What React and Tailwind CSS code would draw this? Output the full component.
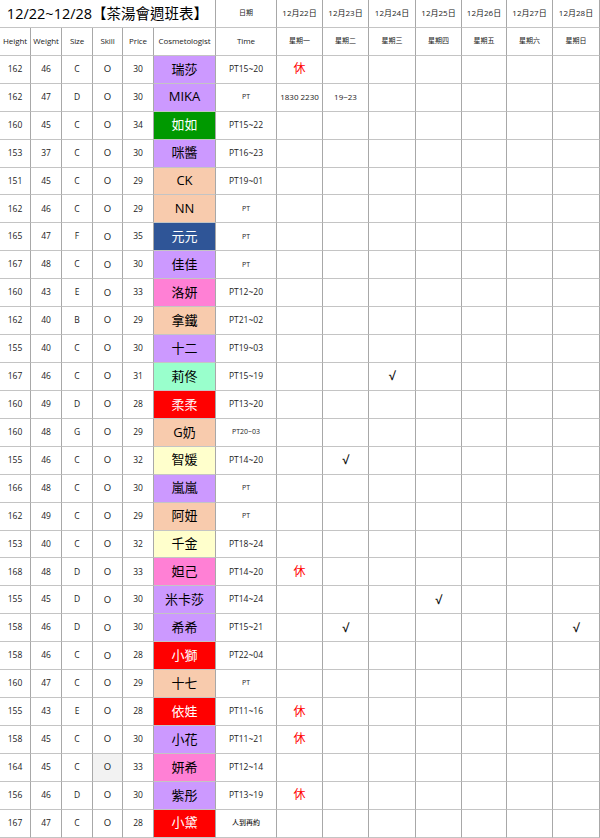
import React from "react";

const C = {
  purple: "bg-[#cc99ff] text-black",
  green: "bg-[#009900] text-white",
  peach: "bg-[#f8cbad] text-black",
  blue: "bg-[#2f5597] text-white",
  pink: "bg-[#ff80d5] text-black",
  mint: "bg-[#99ffcc] text-black",
  red: "bg-[#ff0000] text-white",
  yellow: "bg-[#ffffcc] text-black",
};

const rows = [
  ["162", "46", "C", "30", "瑞莎", "purple", "PT15~20", "n", { 0: "休" }],
  ["162", "47", "D", "30", "MIKA", "purple", "PT", "s", { 0: "1830 2230", 1: "19~23" }],
  ["160", "45", "C", "34", "如如", "green", "PT15~22", "n", {}],
  ["153", "37", "C", "30", "咪醬", "purple", "PT16~23", "n", {}],
  ["151", "45", "C", "29", "CK", "peach", "PT19~01", "n", {}],
  ["162", "46", "C", "29", "NN", "peach", "PT", "s", {}],
  ["165", "47", "F", "35", "元元", "blue", "PT", "s", {}],
  ["167", "48", "C", "30", "佳佳", "purple", "PT", "s", {}],
  ["160", "43", "E", "33", "洛妍", "pink", "PT12~20", "n", {}],
  ["162", "40", "B", "29", "拿鐵", "peach", "PT21~02", "n", {}],
  ["155", "40", "C", "30", "十二", "purple", "PT19~03", "n", {}],
  ["167", "46", "C", "31", "莉佟", "mint", "PT15~19", "n", { 2: "√" }],
  ["160", "49", "D", "28", "柔柔", "red", "PT13~20", "n", {}],
  ["160", "48", "G", "29", "G奶", "peach", "PT20~03", "s", {}],
  ["155", "46", "C", "32", "智媛", "yellow", "PT14~20", "n", { 1: "√" }],
  ["166", "48", "C", "30", "嵐嵐", "purple", "PT", "s", {}],
  ["162", "49", "C", "29", "阿妞", "peach", "PT", "s", {}],
  ["153", "40", "C", "32", "千金", "yellow", "PT18~24", "n", {}],
  ["168", "48", "D", "33", "妲己", "pink", "PT14~20", "n", { 0: "休" }],
  ["155", "45", "D", "30", "米卡莎", "purple", "PT14~24", "n", { 3: "√" }],
  ["158", "46", "D", "30", "希希", "purple", "PT15~21", "n", { 1: "√", 6: "√" }],
  ["158", "46", "C", "28", "小獅", "red", "PT22~04", "n", {}],
  ["160", "47", "C", "29", "十七", "peach", "PT", "s", {}],
  ["155", "43", "E", "28", "依娃", "red", "PT11~16", "n", { 0: "休" }],
  ["158", "45", "C", "30", "小花", "purple", "PT11~21", "n", { 0: "休" }],
  ["164", "45", "C", "33", "妍希", "pink", "PT12~14", "n", {}, true],
  ["156", "46", "D", "30", "紫彤", "purple", "PT13~19", "n", { 0: "休" }],
  ["167", "47", "C", "28", "小黛", "red", "人到再約", "s", {}],
];

const cell =
  "flex items-center justify-center border-r border-r-[#a8a8a8] border-b border-b-[#c4c4c4] overflow-hidden whitespace-nowrap";

function Extra({ v }) {
  if (!v) return null;
  if (v === "休") return <span className="text-[12px] text-[#ff0000]">休</span>;
  if (v === "√") return <span className="text-[12px] font-semibold text-[#111]">√</span>;
  return <span className="text-[8px] font-medium text-[#222]">{v}</span>;
}

export default function App() {
  const dates = ["12月22日", "12月23日", "12月24日", "12月25日", "12月26日", "12月27日", "12月28日"];
  const days = ["星期一", "星期二", "星期三", "星期四", "星期五", "星期六", "星期日"];
  return (
    <div
      className="w-[600px] h-[838px] overflow-hidden bg-white text-[#222]"
      style={{ fontFamily: '"Open Sans", "Noto Sans CJK TC", sans-serif' }}
    >
      <div className="grid grid-cols-[31px_31px_31px_30px_31px_62px_61px_46px_46px_47px_46px_45px_46px_47px] auto-rows-[27.93px]">
        <div className={`${cell} col-span-6 text-[14.5px] text-black`}>12/22~12/28【茶湯會週班表】</div>
        <div className={`${cell} text-[7px]`}>日期</div>
        {dates.map((d) => (
          <div key={d} className={`${cell} text-[8px]`}>{d}</div>
        ))}
        {["Height", "Weight", "Size", "Skill", "Price", "Cosmetologist", "Time"].map((h) => (
          <div key={h} className={`${cell} text-[8px] tracking-[-0.1px]`}>{h}</div>
        ))}
        {days.map((d) => (
          <div key={d} className={`${cell} text-[7px]`}>{d}</div>
        ))}
        {rows.map((r, i) => (
          <React.Fragment key={i}>
            <div className={`${cell} text-[8.5px] font-medium`}>{r[0]}</div>
            <div className={`${cell} text-[8.5px] font-medium`}>{r[1]}</div>
            <div className={`${cell} text-[8.5px] font-medium`}>{r[2]}</div>
            <div className={`${cell} text-[9.5px] ${r[9] ? "bg-[#f2f2f2]" : ""}`}>O</div>
            <div className={`${cell} text-[8.5px] font-medium`}>{r[3]}</div>
            <div className={`${cell} text-[13px] ${C[r[5]]}`}>{r[4]}</div>
            <div className={`${cell} font-medium ${r[7] === "n" ? "text-[8.5px]" : "text-[7px]"}`}>{r[6]}</div>
            {[0, 1, 2, 3, 4, 5, 6].map((k) => (
              <div key={k} className={cell}>
                <Extra v={r[8][k]} />
              </div>
            ))}
          </React.Fragment>
        ))}
      </div>
    </div>
  );
}
